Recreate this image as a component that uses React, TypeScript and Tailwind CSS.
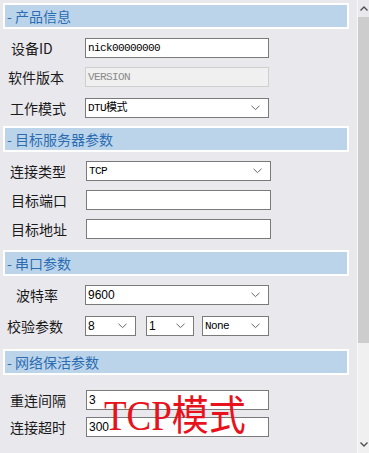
import React from 'react';

const cjk = '"Noto Sans CJK SC", "Noto Sans", sans-serif';
const song = '"Liberation Mono", "Noto Sans CJK SC", monospace';

const Chevron = () => (
  <svg width="9" height="6" viewBox="0 0 9 6" className="shrink-0">
    <path d="M0.5 0.8 L4.5 4.6 L8.5 0.8" fill="none" stroke="#666666" strokeWidth="1" />
  </svg>
);

const Header = ({ title, className = '' }: { title: string; className?: string }) => (
  <div
    className={`ml-[3px] mr-[8px] h-[26px] border-2 border-white bg-[#bcd4ea] flex items-center pl-[2px] text-[14px] text-[#2b6db3] ${className}`}
    style={{ fontFamily: cjk }}
  >
    - {title}
  </div>
);

type RowProps = {
  label: string;
  pl: string;
  className?: string;
  children: React.ReactNode;
};

const Row = ({ label, pl, className = '', children }: RowProps) => (
  <div className={`flex items-center h-[20px] ${className}`}>
    <div className={`w-[85px] shrink-0 text-[14px] text-[#1a1a1a] ${pl}`} style={{ fontFamily: cjk }}>
      {label}
    </div>
    {children}
  </div>
);

const Box = ({
  value,
  select,
  mono = true,
  disabled,
  w = 'w-[184px]',
}: {
  value?: string;
  select?: boolean;
  mono?: boolean;
  disabled?: boolean;
  w?: string;
}) => (
  <div
    className={`${w} h-[20px] flex items-center justify-between pl-[2px] pr-[8px] border ${
      disabled ? 'border-[#cfcfcf] bg-[#f0f0f0] text-[#8a8a8a]' : 'border-[#7a7a7a] bg-white text-black'
    }`}
  >
    <span
      className={mono ? 'text-[11px] tracking-[-0.6px]' : 'text-[12px]'}
      style={{ fontFamily: mono ? song : '"Liberation Sans", Arial, sans-serif' }}
    >
      {value}
    </span>
    {select && <Chevron />}
  </div>
);

export default function App() {
  return (
    <div className="relative w-[369px] h-[453px] overflow-hidden bg-[#e9e8ed] flex">
      <div className="flex-1 flex flex-col pt-[3px]">
        <Header title="产品信息" />
        <Row label="设备ID" pl="pl-[11px]" className="mt-[9px]">
          <Box value="nick00000000" />
        </Row>
        <Row label="软件版本" pl="pl-[8px]" className="mt-[9px]">
          <Box value="VERSION" disabled />
        </Row>
        <Row label="工作模式" pl="pl-[10px]" className="mt-[11px]">
          <Box value="DTU模式" select />
        </Row>

        <Header title="目标服务器参数" className="mt-[8px]" />
        <Row label="连接类型" pl="pl-[10px]" className="mt-[9px]">
          <div className="ml-[1px]">
            <Box value="TCP" select w="w-[185px]" />
          </div>
        </Row>
        <Row label="目标端口" pl="pl-[11px]" className="mt-[9px]">
          <div className="ml-[1px]">
            <Box w="w-[185px]" />
          </div>
        </Row>
        <Row label="目标地址" pl="pl-[11px]" className="mt-[9px]">
          <div className="ml-[1px]">
            <Box w="w-[185px]" />
          </div>
        </Row>

        <Header title="串口参数" className="mt-[11px]" />
        <Row label="波特率" pl="pl-[16px]" className="mt-[9px]">
          <Box value="9600" mono={false} select />
        </Row>
        <Row label="校验参数" pl="pl-[7px]" className="mt-[11px]">
          <div className="flex gap-[10px]">
            <Box value="8" mono={false} select w="w-[51px]" />
            <Box value="1" mono={false} select w="w-[48px]" />
            <div className="ml-[-2px]">
              <Box value="None" select w="w-[67px]" />
            </div>
          </div>
        </Row>

        <Header title="网络保活参数" className="mt-[13px]" />
        <Row label="重连间隔" pl="pl-[10px]" className="mt-[15px]">
          <div className="ml-[1px]">
            <Box value="3" mono={false} w="w-[183px]" />
          </div>
        </Row>
        <Row label="连接超时" pl="pl-[10px]" className="mt-[7px]">
          <div className="ml-[1px]">
            <Box value="300" mono={false} w="w-[183px]" />
          </div>
        </Row>
      </div>

      {/* scrollbar */}
      <div className="w-[12px] h-full border-l border-[#f7f7f7] bg-[#f0f0f0] flex flex-col">
        <div className="h-[17px] flex items-center justify-center bg-[#e9e8ed]">
          <svg width="8" height="5" viewBox="0 0 8 5">
            <path d="M0.5 4.5 L4 1 L7.5 4.5" fill="none" stroke="#505050" strokeWidth="1.4" />
          </svg>
        </div>
        <div className="h-[326px] bg-[#cdcdcd]" />
        <div className="flex-1" />
        <div className="h-[17px] flex items-center justify-center">
          <svg width="8" height="5" viewBox="0 0 8 5">
            <path d="M0.5 0.5 L4 4 L7.5 0.5" fill="none" stroke="#505050" strokeWidth="1.4" />
          </svg>
        </div>
      </div>

      {/* annotation over the inputs */}
      <div
        className="absolute left-[104px] top-[400px] text-[37px] leading-none text-[#e8121c] pointer-events-none origin-bottom scale-y-[1.12]"
        style={{ fontFamily: '"Liberation Serif", "Noto Sans CJK SC", serif' }}
      >
        TCP模式
      </div>
    </div>
  );
}
